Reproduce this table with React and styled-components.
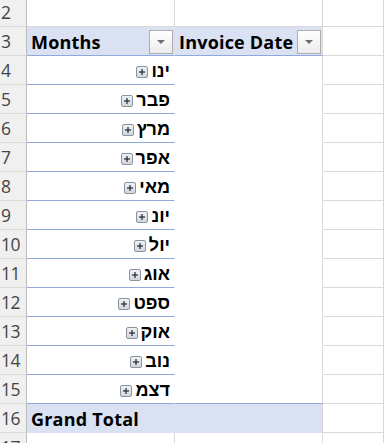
import React from "react";
import styled, { createGlobalStyle } from "styled-components";

const Global = createGlobalStyle`
  html, body { margin: 0; padding: 0; background: #ffffff; overflow: hidden; }
  body { font-family: "Open Sans", "Liberation Sans", sans-serif; }
`;

const GRID = "#d9d9d9";
const BLUE = "#8ea9db";
const BAND = "#d9e1f2";

const Sheet = styled.div`
  display: grid;
  grid-template-columns: 27px 148px 148px 1fr;
  grid-auto-rows: 29px;
  margin-top: -2px;
  width: 384px;
`;

const RowHead = styled.div`
  box-sizing: border-box;
  background: #f0f0f0;
  border-right: 1px solid #bdbdbd;
  border-bottom: 1px solid ${GRID};
  color: #444444;
  font-family: "Open Sans", sans-serif;
  font-size: 17.5px;
  display: flex;
  align-items: flex-end;
  padding: 0 0 2px 1px;
  letter-spacing: -0.6px;
  overflow: hidden;
  white-space: nowrap;
`;

const Cell = styled.div`
  box-sizing: border-box;
  background: ${(p) => (p.$band ? BAND : "#ffffff")};
  border-right: 1px solid ${(p) => p.$right || GRID};
  border-bottom: 1px solid ${(p) => p.$bottom || GRID};
  display: flex;
  align-items: center;
  justify-content: ${(p) => (p.$end ? "flex-end" : "space-between")};
  padding: ${(p) => (p.$end ? "3px 4px 0 0" : "1px 0 0 4px")};
  font-family: "Open Sans", "Liberation Sans", sans-serif;
  font-weight: 700;
  font-size: 18px;
  color: #000000;
  white-space: nowrap;
  overflow: hidden;
`;

const HeadLabel = styled.span`
  letter-spacing: 0.2px;
`;

const DropButton = styled.div`
  box-sizing: border-box;
  width: 24px;
  height: 24px;
  margin-right: 1px;
  border: 1px solid #adadad;
  background: linear-gradient(#ffffff, #ececec);
  display: flex;
  align-items: center;
  justify-content: center;
  flex-shrink: 0;
`;

const Triangle = styled.div`
  width: 0;
  height: 0;
  border-left: 4px solid transparent;
  border-right: 4px solid transparent;
  border-top: 4px solid #6e6e6e;
  margin-top: 1px;
`;

const Expander = styled.div`
  box-sizing: border-box;
  width: 12px;
  height: 12px;
  border: 1px solid #8a94a0;
  border-radius: 2px;
  background: linear-gradient(#f0f1f3, #d3d7dc);
  position: relative;
  margin-right: 3px;
  flex-shrink: 0;
  &::before, &::after {
    content: "";
    position: absolute;
    background: #1f2a36;
  }
  &::before { left: 2px; right: 2px; top: 4px; height: 2px; transform: scaleY(0.6); }
  &::after { top: 2px; bottom: 2px; left: 4px; width: 2px; transform: scaleX(0.6); }
`;

const Hebrew = styled.span`
  font-family: "Liberation Sans", "DejaVu Sans", sans-serif;
  font-weight: 700;
  font-size: 18px;
`;

const months = ["ינו", "פבר", "מרץ", "אפר", "מאי", "יונ", "יול", "אוג", "ספט", "אוק", "נוב", "דצמ"];

export default function App() {
  return (
    <>
      <Global />
      <Sheet>
        <RowHead>2</RowHead>
        <Cell />
        <Cell />
        <Cell />

        <RowHead>3</RowHead>
        <Cell $band $right={BAND} $bottom={BLUE}>
          <HeadLabel>Months</HeadLabel>
          <DropButton><Triangle /></DropButton>
        </Cell>
        <Cell $band $bottom={BLUE}>
          <HeadLabel>Invoice Date</HeadLabel>
          <DropButton><Triangle /></DropButton>
        </Cell>
        <Cell />

        {months.map((m, i) => (
          <React.Fragment key={m}>
            <RowHead>{i + 4}</RowHead>
            <Cell $end $right="#ffffff" $bottom={BLUE}>
              <Expander />
              <Hebrew dir="rtl">{m}</Hebrew>
            </Cell>
            <Cell $bottom={i === months.length - 1 ? BLUE : "#ffffff"} />
            <Cell />
          </React.Fragment>
        ))}

        <RowHead>16</RowHead>
        <Cell $band $right={BAND} $bottom={BAND}>
          <HeadLabel>Grand Total</HeadLabel>
        </Cell>
        <Cell $band $bottom={BAND} />
        <Cell />

        <RowHead>17</RowHead>
        <Cell />
        <Cell />
        <Cell />
      </Sheet>
    </>
  );
}
